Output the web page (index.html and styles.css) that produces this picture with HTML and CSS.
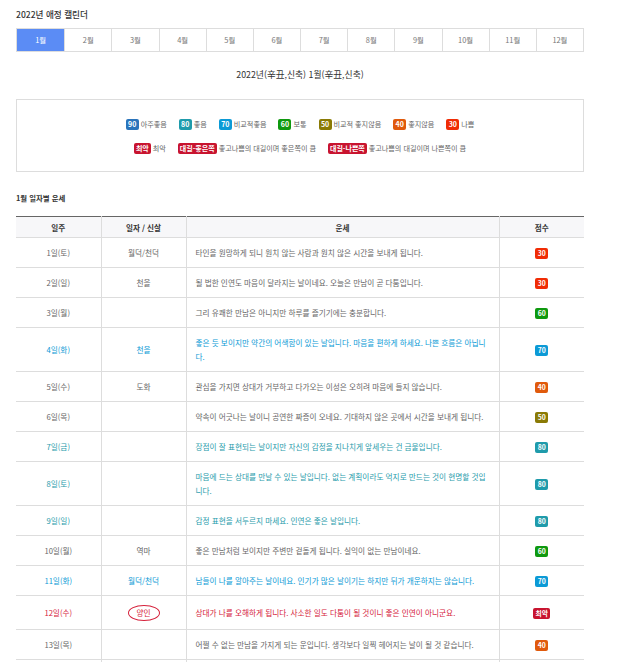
FILE: index.html
```html
<!DOCTYPE html>
<html lang="ko">
<head>
<meta charset="utf-8">
<link rel="stylesheet" href="styles.css">
</head>
<body>
<div class="wrap">
  <h1 class="title">2022년 애정 캘린더</h1>
  <ul class="tabs">
    <li class="tab active">1월</li>
    <li class="tab">2월</li>
    <li class="tab">3월</li>
    <li class="tab">4월</li>
    <li class="tab">5월</li>
    <li class="tab">6월</li>
    <li class="tab">7월</li>
    <li class="tab">8월</li>
    <li class="tab">9월</li>
    <li class="tab">10월</li>
    <li class="tab">11월</li>
    <li class="tab">12월</li>
  </ul>
  <p class="subtitle">2022년(辛丑,신축) 1월(辛丑,신축)</p>
  <div class="legend">
    <div class="legend-row">
      <span class="item"><span class="badge s90">90</span>아주좋음</span>
      <span class="item"><span class="badge s80">80</span>좋음</span>
      <span class="item"><span class="badge s70">70</span>비교적좋음</span>
      <span class="item"><span class="badge s60">60</span>보통</span>
      <span class="item"><span class="badge s50">50</span>비교적 좋지않음</span>
      <span class="item"><span class="badge s40">40</span>좋지않음</span>
      <span class="item"><span class="badge s30">30</span>나쁨</span>
    </div>
    <div class="legend-row">
      <span class="item"><span class="badge worst">최악</span>최악</span>
      <span class="item"><span class="badge worst">대길-좋은쪽</span>좋고나쁨의 대길이며 좋은쪽이 큼</span>
      <span class="item"><span class="badge worst">대길-나쁜쪽</span>좋고나쁨의 대길이며 나쁜쪽이 큼</span>
    </div>
  </div>
  <h2 class="section">1월 일자별 운세</h2>
  <table class="fortune">
    <colgroup>
      <col class="c1"><col class="c2"><col class="c3"><col class="c4">
    </colgroup>
    <thead>
      <tr><th>일주</th><th>일자 / 신살</th><th>운세</th><th>점수</th></tr>
    </thead>
    <tbody>
      <tr><td>1일(토)</td><td>월덕/천덕</td><td class="txt">타인을 원망하게 되니 원치 않는 사람과 원치 않은 시간을 보내게 됩니다.</td><td><span class="badge s30">30</span></td></tr>
      <tr><td>2일(일)</td><td>천을</td><td class="txt">될 법한 인연도 마음이 달라지는 날이네요. 오늘은 만남이 곧 다툼입니다.</td><td><span class="badge s30">30</span></td></tr>
      <tr><td>3일(월)</td><td></td><td class="txt">그리 유쾌한 만남은 아니지만 하루를 즐기기에는 충분합니다.</td><td><span class="badge s60">60</span></td></tr>
      <tr class="blue"><td>4일(화)</td><td>천을</td><td class="txt">좋은 듯 보이지만 약간의 어색함이 있는 날입니다. 마음을 편하게 하세요. 나쁜 흐름은 아닙니다.</td><td><span class="badge s70">70</span></td></tr>
      <tr><td>5일(수)</td><td>도화</td><td class="txt">관심을 가지면 상대가 거부하고 다가오는 이성은 오히려 마음에 들지 않습니다.</td><td><span class="badge s40">40</span></td></tr>
      <tr><td>6일(목)</td><td></td><td class="txt">약속이 어긋나는 날이니 공연한 짜증이 오네요. 기대하지 않은 곳에서 시간을 보내게 됩니다.</td><td><span class="badge s50">50</span></td></tr>
      <tr class="teal"><td>7일(금)</td><td></td><td class="txt">장점이 잘 표현되는 날이지만 자신의 감정을 지나치게 앞세우는 건 금물입니다.</td><td><span class="badge s80">80</span></td></tr>
      <tr class="teal"><td>8일(토)</td><td></td><td class="txt">마음에 드는 상대를 만날 수 있는 날입니다. 없는 계획이라도 억지로 만드는 것이 현명할 것입니다.</td><td><span class="badge s80">80</span></td></tr>
      <tr class="teal"><td>9일(일)</td><td></td><td class="txt">감정 표현을 서두르지 마세요. 인연은 좋은 날입니다.</td><td><span class="badge s80">80</span></td></tr>
      <tr><td>10일(월)</td><td>역마</td><td class="txt">좋은 만남처럼 보이지만 주변만 겉돌게 됩니다. 실익이 없는 만남이네요.</td><td><span class="badge s60">60</span></td></tr>
      <tr class="blue"><td>11일(화)</td><td>월덕/천덕</td><td class="txt">남들이 나를 알아주는 날이네요. 인기가 많은 날이기는 하지만 뒤가 개운하지는 않습니다.</td><td><span class="badge s70">70</span></td></tr>
      <tr class="red"><td>12일(수)</td><td><span class="ring">양인</span></td><td class="txt">상대가 나를 오해하게 됩니다. 사소한 일도 다툼이 될 것이니 좋은 인연이 아니군요.</td><td><span class="badge worst">최악</span></td></tr>
      <tr><td>13일(목)</td><td></td><td class="txt">어쩔 수 없는 만남을 가지게 되는 운입니다. 생각보다 일찍 헤어지는 날이 될 것 같습니다.</td><td><span class="badge s40">40</span></td></tr>
      <tr><td>14일(금)</td><td></td><td class="txt">서로의 마음을 확인하기 어려운 날입니다. 조급해하지 마세요.</td><td><span class="badge s50">50</span></td></tr>
    </tbody>
  </table>
</div>
</body>
</html>
```
FILE: styles.css
```css
* { box-sizing: border-box; }
body {
  margin: 0;
  background: #fff;
  font-family: "Noto Sans CJK KR", "Noto Sans", sans-serif;
  color: #555;
}
.wrap {
  width: 568px;
  margin-left: 16px;
  padding-top: 7px;
}
.title {
  margin: 0;
  font-size: 8.6px;
  font-weight: 500;
  color: #333;
  line-height: 14px;
}
.tabs {
  list-style: none;
  margin: 7px 0 0;
  padding: 0;
  display: grid;
  grid-template-columns: repeat(12, 1fr);
  border: 1px solid #ddd;
}
.tab {
  height: 22px;
  line-height: 22px;
  text-align: center;
  font-size: 7.4px;
  color: #777;
  border-left: 1px solid #ddd;
}
.tab:first-child { border-left: 0; }
.tab.active {
  background: #5b8cf5;
  color: #fff;
}
.subtitle {
  margin: 16px 0 0;
  text-align: center;
  font-size: 8.8px;
  line-height: 14px;
  color: #333;
}
.legend {
  margin-top: 17px;
  border: 1px solid #ddd;
  padding: 18px 0 17px;
  display: flex;
  flex-direction: column;
  align-items: center;
  gap: 12px;
}
.legend-row {
  display: flex;
  gap: 12px;
  align-items: center;
  font-size: 7.1px;
  color: #666;
  line-height: 12px;
}
.item {
  display: inline-flex;
  align-items: center;
  gap: 2px;
}
.badge {
  display: inline-block;
  min-width: 13px;
  height: 11px;
  line-height: 11px;
  padding: 0 2px;
  border-radius: 2px;
  color: #fff;
  font-size: 7px;
  font-weight: 700;
  text-align: center;
  vertical-align: middle;
}
.s90 { background: #2a74bb; }
.s80 { background: #1f9bab; }
.s70 { background: #0b9ad6; }
.s60 { background: #0f990f; }
.s50 { background: #8a7a05; }
.s40 { background: #e05a0c; }
.s30 { background: #f02c05; }
.worst { background: #c8142f; }
.section {
  margin: 19px 0 0;
  font-size: 7.4px;
  font-weight: 700;
  color: #333;
  line-height: 14px;
}
.fortune {
  margin-top: 11px;
  width: 568px;
  table-layout: fixed;
  border-collapse: collapse;
  border-top: 1px solid #666;
}
.c1, .c2, .c4 { width: 85px; }
.c3 { width: 313px; }
.fortune th {
  background: #f7f7f9;
  font-size: 7.6px;
  font-weight: 700;
  color: #333;
  height: 21px;
  padding: 0;
  border: 1px solid #ddd;
  border-top: 0;
}
.fortune td {
  font-size: 7.65px;
  line-height: 14px;
  padding: 7.5px 4px;
  text-align: center;
  color: #666;
  border: 1px solid #ddd;
  vertical-align: middle;
}
.fortune th:first-child, .fortune td:first-child { border-left: 0; }
.fortune th:last-child, .fortune td:last-child { border-right: 0; }
.fortune td.txt {
  text-align: left;
  padding: 7.5px 9px;
}
.fortune tr.blue td { color: #0b9ad6; }
.fortune tr.teal td { color: #1f9bab; }
.fortune tr.red td { color: #d5203a; padding-top: 8.5px; padding-bottom: 8.5px; }
.fortune td .badge { font-size: 6.8px; }
.ring {
  display: inline-block;
  width: 32px;
  height: 16px;
  line-height: 14px;
  border: 1px solid #d5203a;
  border-radius: 50%;
  color: #d5203a;
}
```
